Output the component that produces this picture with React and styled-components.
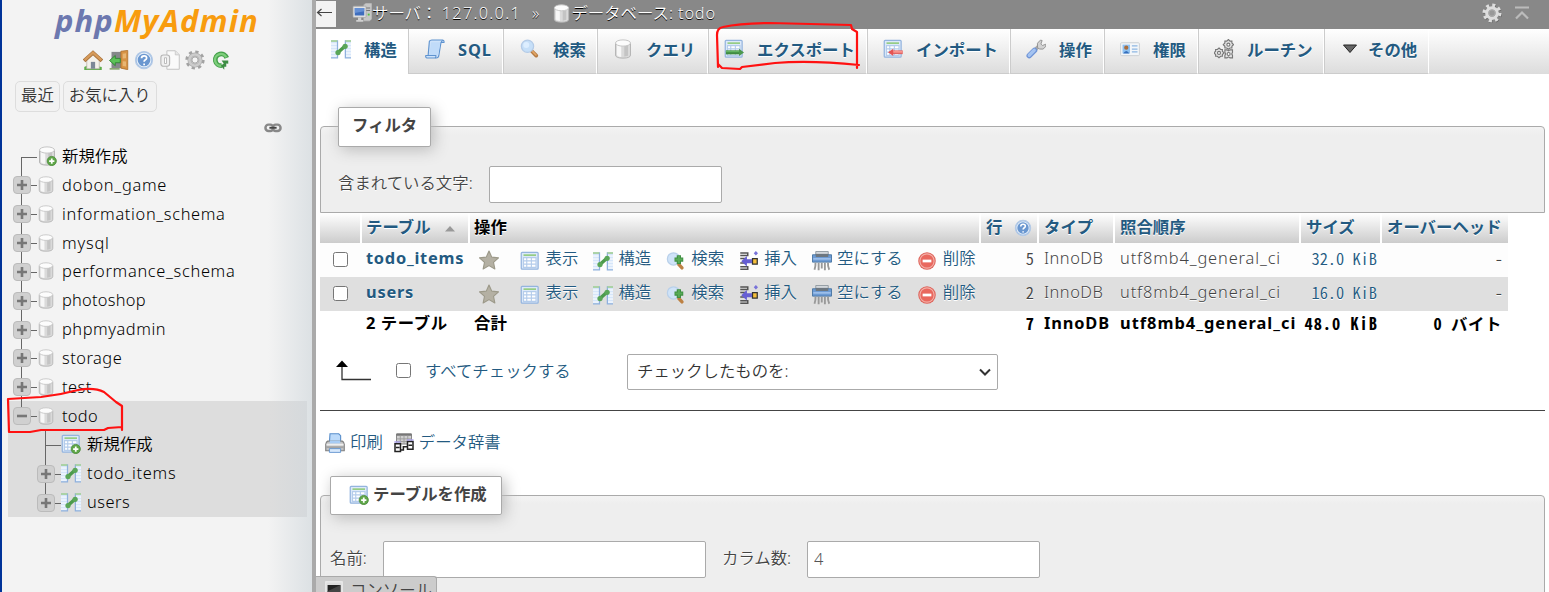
import React, { useState } from 'react';
import styled, { createGlobalStyle } from 'styled-components';

const GlobalStyle = createGlobalStyle`
  * {
    box-sizing: border-box;
  }
  body {
    margin: 0;
    overflow: hidden;
    background: #fff;
    color: #444;
    font-family: 'Noto Sans', 'Noto Sans CJK JP', sans-serif;
    font-size: 16.4px;
    font-weight: 350;
    line-height: 24px;
  }
  svg {
    display: block;
    flex: none;
  }
`;

const shapes = {
  home: (
    <>
      <path d="M1 13.5q3-2.5 14 0V16H1z" fill="#5fae4c" />
      <path d="M3 7.5 8 3l5 4.5V15H3z" fill="#f4f1ea" stroke="#b9b2a4" strokeWidth=".6" />
      <path d="M6.3 9.5h3.4V15H6.3z" fill="#7d8896" />
      <path d="M.9 8.7 8 2.3l7.1 6.4" fill="none" stroke="#a8733c" strokeWidth="3" />
      <path d="M1.3 8.1 8 2.1l6.7 6" fill="none" stroke="#d69a5a" strokeWidth="1.8" />
    </>
  ),
  exit: (
    <>
      <path d="M2 1.5h8v13H2z" fill="#85888a" />
      <path d="M9.5 1 15 .3v15.4L9.5 14.5z" fill="#d79345" stroke="#a96b27" strokeWidth=".6" />
      <path d="M11 3l2.6-.4v4L11 6.8zM11 9l2.6.1v4L11 12.7z" fill="#e8b673" />
      <path d="M.4 8.4 5 4.4v2.3h4v3.5H5v2.3z" fill="#5cc257" stroke="#2f8132" strokeWidth=".7" />
      <path d="M.5 14.5h8v1.2h-8z" fill="#7e9d63" />
    </>
  ),
  help: (
    <>
      <circle cx="8" cy="8" r="6.8" fill="#8fb3df" stroke="#b4cae6" />
      <circle cx="8" cy="8" r="5.5" fill="#6a97d0" stroke="#e3edf8" strokeWidth=".9" />
      <path d="M6 6.6q0-2 2.1-2 2 0 2 1.7 0 1-1.2 1.7-.8.5-.8 1.4M8.1 10.8v1.3" fill="none" stroke="#fff" strokeWidth="1.4" />
    </>
  ),
  docs: (
    <>
      <path d="M5.5.6h6.8l3.1 3.2v11.6H5.5z" fill="#fafafa" stroke="#c4c4c4" strokeWidth=".8" />
      <path d="M12.2.7v3.2h3.1" fill="#e6e6e6" stroke="#c4c4c4" strokeWidth=".6" />
      <rect x=".7" y="4" width="7" height="9" rx="2" fill="#f0f0f0" stroke="#b5b5b5" strokeWidth=".9" />
      <path d="M3.6 6.2h1.6v4.6H3.6z" fill="#fff" stroke="#aaa" strokeWidth=".6" />
    </>
  ),
  gear: (
    <>
      <circle cx="8" cy="8" r="6.4" fill="none" stroke="#a2a2a2" strokeWidth="2.6" strokeDasharray="2.5 2.53" />
      <circle cx="8" cy="8" r="4.4" fill="#eee" stroke="#aaa" strokeWidth="3.2" />
      <circle cx="8" cy="8" r="4.5" fill="none" stroke="#ccc" strokeWidth="2" />
      <circle cx="8" cy="8" r="2.5" fill="#f4f4f4" stroke="#999" strokeWidth=".7" />
    </>
  ),
  gearLight: (
    <>
      <circle cx="8.4" cy="8.6" r="6.2" fill="none" stroke="#666" strokeWidth="2.8" strokeDasharray="2.4 2.47" />
      <circle cx="8" cy="8" r="6.2" fill="none" stroke="#ddd" strokeWidth="2.8" strokeDasharray="2.4 2.47" />
      <circle cx="8" cy="8" r="4.2" fill="none" stroke="#ddd" strokeWidth="2.6" />
      <circle cx="8" cy="8" r="2.6" fill="#999" stroke="#bbb" strokeWidth=".5" />
    </>
  ),
  reload: (
    <>
      <path d="M12.6 6.3A4.7 4.7 0 1 0 8.6 12.5" fill="none" stroke="#45a04b" strokeWidth="3.8" />
      <path d="M12.2 5.9A4.7 4.7 0 1 0 8.6 12.5" fill="none" stroke="#7dce7b" strokeWidth="1.9" />
      <path d="M8.5 8.3h5.3v2.6l-1.6-.2v2.6h-1.6v2.5L7.8 12.6l2.4-1.9z" fill="#3c8d43" />
    </>
  ),
  db: (
    <>
      <path d="M2 3.5v9.3Q2 15.3 8 15.3t6-2.5V3.5z" fill="#dadada" stroke="#b6b6b6" strokeWidth=".8" />
      <path d="M3.2 4.5h3.4v9.8q-3.4-.3-3.4-1.8z" fill="#f7f7f7" />
      <path d="M9 5h3v8.3l-3 .7z" fill="#c4c4c4" />
      <ellipse cx="8" cy="3.2" rx="6" ry="2.5" fill="#fcfcfc" stroke="#c6c6c6" strokeWidth=".8" />
    </>
  ),
  plus: (
    <>
      <circle cx="11.8" cy="12" r="3.7" fill="#5fa648" stroke="#4a8a38" strokeWidth=".6" />
      <path d="M11.8 9.9v4.2M9.7 12h4.2" stroke="#fff" strokeWidth="1.4" />
    </>
  ),
  table: (
    <>
      <rect x="1" y="1" width="13.5" height="13.5" rx=".7" fill="#dce9f9" stroke="#94b4de" strokeWidth="1" />
      <path d="M2.8 3.3h10" stroke="#8cc873" strokeWidth="1.2" />
      <path d="M2.8 5.3h10v7.8h-10z" fill="#fff" stroke="#b4cceb" strokeWidth=".9" />
      <path d="M2.8 7.9h10M2.8 10.5h10M5.4 5.3v7.8M9.1 5.3v7.8" stroke="#b4cceb" strokeWidth=".9" />
    </>
  ),
  structure: (
    <>
      <path d="M0 1h5v14H0z" fill="#d6e6fa" />
      <path d="M11.5 1H16v14h-4.5z" fill="#d6e6fa" />
      <path d="M0 4h5M0 6.4h5M0 8.8h5M0 11.2h5M0 13.6h5M11.5 4H16M11.5 6.4H16M11.5 8.8H16M11.5 11.2H16M11.5 13.6H16" stroke="#fff" strokeWidth=".8" />
      <path d="M5.2 1v14H0M11.5 1v14H16" fill="none" stroke="#8fb1de" strokeWidth="1" />
      <path d="M0 1.6h5M11.5 1.6H16" stroke="#9ccc8c" strokeWidth="1.2" />
      <path d="M5.5 10.8 10.7 6.2" stroke="#4c9a4c" strokeWidth="2.8" />
      <circle cx="5.6" cy="10.8" r="2.1" fill="#5aa658" />
      <circle cx="11.3" cy="5.8" r="2.1" fill="#5aa658" />
    </>
  ),
  sql: (
    <>
      <path d="M3.5 1.8Q4 .8 5.5.8h8.7q1.3.3 1 2h-2.4L11 13.6q-.4 1.6-2 1.6H1.5q-1.3-.4-.8-2h1.8z" fill="#cfe3fa" stroke="#5f93cf" strokeWidth=".9" />
      <path d="M4.8 2.5h7.4l-1.7 10.3H3.4z" fill="#c0dbf9" />
      <path d="M1 13.2h7.7q.3 1.2-.6 2M13 2.8q0-1.5 1.5-1.6" fill="none" stroke="#5f93cf" strokeWidth=".9" />
    </>
  ),
  search: (
    <>
      <path d="m9.3 9.6 3.7 3.7" stroke="#b57a42" strokeWidth="3" strokeLinecap="round" />
      <path d="m10.2 10.1 2.6 2.7" stroke="#e3a767" strokeWidth="1.3" strokeLinecap="round" />
      <circle cx="6" cy="5.8" r="4.9" fill="#c6dff8" stroke="#b4cbe7" strokeWidth="1" />
      <circle cx="5" cy="4.7" r="2.4" fill="#def" />
    </>
  ),
  browse: (
    <>
      <path d="m10 10.5 2.8 3" stroke="#bd8143" strokeWidth="2.7" strokeLinecap="round" />
      <circle cx="6" cy="6.3" r="4.9" fill="#cfe3f8" stroke="#b9d0ea" />
      <path d="M10.3 3.3v7M6.8 6.8h7" stroke="#3f8f42" strokeWidth="3.4" />
      <path d="M10.3 4v5.6M7.5 6.8h5.6" stroke="#58ab57" strokeWidth="1.6" />
    </>
  ),
  exportArrow: (
    <>
      <path d="M1.5 10.7h11" stroke="#3f8b42" strokeWidth="3.2" />
      <path d="M1.5 10h11" stroke="#62b463" strokeWidth="1.2" />
      <path d="m12 7.8 4 2.9-4 2.9z" fill="#4c984d" />
    </>
  ),
  importArrow: (
    <>
      <path d="M7 10.6h8.8" stroke="#e06565" strokeWidth="3" />
      <path d="M7 10.3h8.5" stroke="#ff9a93" strokeWidth="1.2" />
      <path d="M8.2 7.7 4 10.6l4.2 2.9z" fill="#e45353" />
    </>
  ),
  wrench: (
    <>
      <path d="m7.3 8.6 3-3" stroke="#a6a6a6" strokeWidth="3" />
      <path d="M9.2 6.6Q8 3 11.5.9l1.4.3-1 2.8 1.2 1.2 2.6-1 .3 1.6q-2 3.4-5.400 2.200z" fill="#d2d2d2" stroke="#8d8d8d" strokeWidth=".7" />
      <path d="m2.6 13.3 4.2-4.2" stroke="#6f94d6" strokeWidth="4.400" strokeLinecap="round" />
      <path d="m2.6 13 4-4" stroke="#a4c3f1" strokeWidth="2.6" strokeLinecap="round" />
    </>
  ),
  rights: (
    <>
      <rect x=".5" y="3" width="15" height="10.3" rx=".8" fill="#f3f6f9" stroke="#ccd0d4" strokeWidth=".8" />
      <path d="M2 4.5h6v7H2z" fill="#8fc1f0" />
      <circle cx="5" cy="6.9" r="1.7" fill="#ab6d3b" />
      <path d="M2.5 11.5q2.5-4 5 0z" fill="#346fbd" />
      <path d="M9.5 5.5h4.5M9.5 8h4.5M9.5 10.3h4.5" stroke="#8db6e2" strokeWidth="1" />
    </>
  ),
  routines: (
    <g fill="#e4e4e4" stroke="#777" strokeWidth=".9">
      <path d="M11.5.4l1.3 1.3h1.5v1.5L15.6 4.5l-1.3 1.3v1.4h-1.5l-1.3 1-1.3-1H8.7V5.8L7.4 4.5l1.3-1.3V1.7h1.5z" />
      <path d="M4 7.2l1.3 1.2h1.4v1.4L8 11.1l-1.3 1.3v1.4H5.3L4 15l-1.3-1.2H1.3v-1.4L0 11.1l1.3-1.3V8.4h1.4z" />
      <path d="M8.7 8.7h1.7l1.2.8 1.2-.8h2v2l-.6 1.2.6 1.2v2h-2l-1.2-.8-1.2.8H8.7v-2l.6-1.2-.6-1.2z" />
      <circle cx="11.5" cy="4.5" r="1.2" fill="#fff" />
      <circle cx="4" cy="11.1" r="1.2" fill="#fff" />
      <circle cx="11.7" cy="12" r="1.2" fill="#fff" />
    </g>
  ),
  server: (
    <>
      <path d="M9 1.5 11 0h5v13l-2 1.5H9z" fill="#c6c6c6" stroke="#8f8f8f" strokeWidth=".5" />
      <path d="M11 4h3.5M11 6h3.5" stroke="#777" strokeWidth=".8" />
      <path d="M12.6 8.5h1.5V10h-1.5z" fill="#4fc13d" />
      <rect x=".8" y="2.5" width="10.4" height="9" rx=".6" fill="#e3e3e3" stroke="#a0a0a0" strokeWidth=".6" />
      <path d="M2.2 4h7.6v6H2.2z" fill="#3e6dbd" />
      <path d="M2.2 4h7.6v2.5L2.2 8z" fill="#6590d5" />
      <path d="M4.8 11.5h2.6v2H9v1.4H3.4v-1.4h1.4z" fill="#d0d0d0" />
    </>
  ),
  star: (
    <path
      d="m8 .8 2.2 4.9 5.4.6-4 3.6 1.1 5.3L8 12.5l-4.7 2.7 1.1-5.3-4-3.6 5.4-.6z"
      fill="#b4b0a3"
      stroke="#9c9989"
      strokeWidth=".9"
      strokeLinejoin="round"
    />
  ),
  insert: (
    <>
      <path d="M1 1.5h6v2H1M1 6h5M1 9.5h5M1 12.5h6v2H1" fill="none" stroke="#555" strokeWidth="1.2" />
      <path d="M1.8 8.2 6.3 4v2.6h4v3.2h-4v2.6z" fill="#665fd3" />
      <path d="M10.8 6h3.8v4.5h-3.8z" fill="#f6bf3b" stroke="#333" strokeWidth="1" />
      <path d="M13.5 0l1.7 1.8-1.7 1.8-1.7-1.8z" fill="#7772d9" />
    </>
  ),
  empty: (
    <>
      <path d="M3 .4h10v3H3z" fill="#d3d8dc" stroke="#8d969e" strokeWidth=".7" />
      <path d="M.4 3h15.2v5.9H.4z" fill="#6d9bd4" stroke="#44719f" strokeWidth=".7" />
      <path d="M3 2.3h10v2.5H3z" fill="#6d7780" />
      <path d="M1 6.3h14" stroke="#9fc1eb" strokeWidth="1.3" />
      <path d="M2.8 9.3Q3 12 2 15M5.3 9.3v6M7.8 9.3v4.7M10.3 9.3v6M12.8 9.3q-.3 3 1 5.7" fill="none" stroke="#999" strokeWidth="1.5" />
    </>
  ),
  drop: (
    <>
      <circle cx="8" cy="8" r="7" fill="#de6259" />
      <circle cx="8" cy="8" r="5.7" fill="#e9685e" stroke="#f3b0a8" strokeWidth=".9" />
      <path d="M4.5 8h7" stroke="#fff" strokeWidth="2.2" />
    </>
  ),
  print: (
    <>
      <path d="M4 .6h7l1.5 1.5V8H3.5z" fill="#bcdafa" stroke="#5a8fcb" strokeWidth=".9" />
      <path d="M.6 9q.3-2 1.6-2.5h11.6q1.3.5 1.6 2.5v5.2H.6z" fill="#c2c2c2" stroke="#808080" strokeWidth=".9" />
      <path d="M3.8 6h8.4v2.5H3.8z" fill="#a7ccf5" />
      <path d="M1.2 9.3h13.6" stroke="#eee" strokeWidth="1.5" />
      <path d="M1.2 11.3h13.6" stroke="#999" strokeWidth="1" />
      <path d="M3.5 12.5h9v3h-9z" fill="#d7e8fb" stroke="#5a8fcb" strokeWidth=".7" />
    </>
  ),
  dictionary: (
    <>
      <path d="M2 .8h12v8H2z" fill="#d0d0d0" stroke="#888" strokeWidth=".8" />
      <path d="M2 1.3h12" stroke="#777" strokeWidth="1.8" />
      <path d="M2 4.7h12M2 6.8h12M5 2v7M8 2v7M11 2v7" stroke="#999" strokeWidth=".7" />
      <path d="M.8 8.5h4.4v6.3H.8zM10.8 6.8h4.4v6.2h-4.4z" fill="#fff" stroke="#222" strokeWidth="1.2" />
      <path d="M1.5 11.5h3M11.5 9.8h3" stroke="#222" strokeWidth="1.2" />
      <path d="M5.5 13.5h2v-2.5h3" fill="none" stroke="#222" strokeWidth="1.2" />
      <path d="M.3 7.2h5M10.3 5.6h5.3" stroke="#aaa2e8" strokeWidth="1.2" />
    </>
  ),
  link: (
    <g fill="none" stroke="#888" strokeWidth="2.2">
      <rect x="1.3" y="5" width="7" height="5.6" rx="2.7" />
      <rect x="7.7" y="5" width="7" height="5.6" rx="2.7" />
      <path d="M4.8 7.8h6.4" stroke="#444" strokeWidth="1.7" />
    </g>
  ),
  console: (
    <>
      <rect x=".7" y=".7" width="14.6" height="14" fill="#ddd" stroke="#eee" />
      <path d="M2.3 3.5h11.4v10H2.3z" fill="#222" />
      <path d="M2.3 9 13.7 3.5v10H2.3z" fill="#444" />
    </>
  ),
};

const Icon = ({ names, size = 20 }) => (
  <svg width={size} height={size} viewBox="0 0 16 16">
    {names.split(' ').map((name) => (
      <g key={name}>{shapes[name]}</g>
    ))}
  </svg>
);

const Page = styled.div`
  display: flex;
  height: 592px;
  overflow: hidden;
`;

const Sidebar = styled.aside`
  width: 316px;
  flex: none;
  border-left: 2px solid #039;
  border-right: 4px solid #aaa;
  background: linear-gradient(to right, #f3f3f3 266px, #dce1e4 310px);
  color: #000;
`;

const Logo = styled.div`
  height: 45px;
  padding: 0 0 0 53px;
  color: #f89c0e;
  font: italic 700 31px/40px 'Noto Sans', sans-serif;
  letter-spacing: 1.1px;
  white-space: nowrap;

  span {
    color: #6c78af;
  }
`;

const NavIcons = styled.div`
  display: flex;
  gap: 5.5px;
  height: 36px;
  padding: 5px 0 0 81px;
`;

const QuickLinks = styled.div`
  display: flex;
  gap: 3px;
  padding-left: 13px;
`;

const QuickLink = styled.button`
  height: 31px;
  padding: 0 5px 4px;
  border: 1px solid #ddd;
  border-radius: 5px;
  background: #f2f2f2;
  color: #333;
  font: inherit;
  line-height: 24px;
  white-space: nowrap;
`;

const LinkToggle = styled.div`
  display: flex;
  height: 29.6px;
  padding: 7px 0 0 262px;
`;

const Tree = styled.div`
  margin-left: 6px;
`;

const TreeGroup = styled.div`
  width: 299px;
  background: ${(props) =>
    props.$selected
      ? 'linear-gradient(to right, #ddd 262px, #d5d9dc 299px)'
      : 'transparent'};
`;

const TreeRow = styled.div`
  display: flex;
  align-items: center;
  height: 28.85px;
  padding-left: ${(props) => props.$level * 24}px;
`;

const TreeLabel = styled.a`
  padding-left: ${(props) => props.$pad}px;
  line-height: 28px;
  letter-spacing: ${(props) => props.$ls || 0}px;
  white-space: nowrap;
`;

const Main = styled.main`
  flex: 1;
  min-width: 0;
  position: relative;
`;

const TopBar = styled.header`
  display: flex;
  align-items: center;
  height: 29px;
  padding-bottom: 3px;
  background: #888;
  color: #fff;
  text-shadow: 0 1px 0 #000;
  white-space: nowrap;
`;

const BackButton = styled.button`
  width: 20px;
  height: 26px;
  margin: 1px 16px 0 0;
  padding: 0;
  border: 0;
  background: #f3f3f3;
`;

const Crumb = styled.span`
  display: flex;
  align-items: center;
  white-space: pre;
`;

const Spaced = styled.span`
  letter-spacing: ${(props) => props.$ls}px;
`;

const Separator = styled.span`
  margin: 0 13px 0 11px;
`;

const TopTools = styled.div`
  display: flex;
  align-items: center;
  gap: 12px;
  margin-left: auto;
  padding-right: 19px;
`;

const Tabs = styled.nav`
  display: flex;
  height: 45px;
  background: linear-gradient(#fff, #dcdcdc);
`;

const Tab = styled.a`
  display: flex;
  gap: ${(props) => props.$gap || 13}px;
  width: ${(props) => props.$width}px;
  height: 45px;
  padding: 10px 0 0 ${(props) => props.$pad || 15}px;
  border-left: ${(props) => (props.$active ? 0 : '1px solid #ccc')};
  border-right: 1px solid #fff;
  border-bottom: 1px solid ${(props) => (props.$active ? '#fff' : '#ccc')};
  background: ${(props) => (props.$active ? '#fff' : 'transparent')};
  color: #235a81;
  font-weight: bold;
  line-height: 22px;
  letter-spacing: ${(props) => props.$ls || 0}px;
  text-shadow: 0 1px 0 #fff;
  white-space: nowrap;
`;

const Fieldset = styled.section`
  height: ${(props) => props.$height}px;
  margin: ${(props) => props.$top}px 4px 0;
  padding-left: ${(props) => props.$pad}px;
  border: 1px solid #aaa;
  border-radius: 4px 4px 0 0;
  background: linear-gradient(#f3f3f3, #eee 8px);
  text-shadow: 0 1px 0 #fff;
`;

const Legend = styled.div`
  display: flex;
  gap: 4px;
  width: ${(props) => props.$width}px;
  height: ${(props) => props.$height || 40}px;
  margin-top: -20px;
  padding: 5px 0 0 ${(props) => props.$pad}px;
  border: 1px solid #aaa;
  border-radius: 2px;
  background: #fff;
  box-shadow: 3px 3px 15px #bbb;
  color: #444;
  font-weight: bold;
  white-space: nowrap;

  svg {
    margin-top: 3px;
  }
`;

const FieldRow = styled.div`
  display: flex;
  margin-top: ${(props) => props.$top}px;
  white-space: nowrap;
`;

const Label = styled.label`
  width: ${(props) => props.$width}px;
  padding-top: 5px;
`;

const Input = styled.input`
  width: ${(props) => props.$width}px;
  height: 37px;
  margin-right: 16px;
  padding: 0 6px 2px;
  border: 1px solid #aaa;
  border-radius: 2px;
  background: #fff;
  color: #555;
  font: inherit;
`;

const TableGrid = styled.div`
  width: 1188px;
  margin-left: 4px;
`;

const GridRow = styled.div`
  display: grid;
  grid-template-columns: 42px 108px 511px 58px 76px 186px 81px 126px;
  height: ${(props) => props.$height || 34}px;
  background: ${(props) => props.$bg || '#fff'};
  color: ${(props) => (props.$total ? '#000' : '#444')};
  font-weight: ${(props) => (props.$total ? 'bold' : 'inherit')};
  text-shadow: ${(props) => (props.$total ? 'none' : '0 1px 0 #fff')};
`;

const HeadCell = styled.div`
  display: flex;
  align-items: center;
  gap: 13px;
  padding: 0 0 3px 4px;
  border-right: 2px solid #fff;
  background: linear-gradient(#fff, #ccc);
  color: ${(props) => (props.$plain ? '#000' : '#235a81')};
  font-weight: bold;
  white-space: nowrap;

  &:nth-child(n + 4) {
    padding-left: 5px;
    gap: 12px;
  }
  &:last-child {
    border-right: 0;
  }
  svg {
    margin-top: 3px;
  }
`;

const Cell = styled.div`
  display: flex;
  align-items: center;
  justify-content: ${(props) => (props.$right ? 'flex-end' : 'flex-start')};
  padding: 0 ${(props) => (props.$right ? props.$right : 0)}px 4px
    ${(props) => (props.$right ? 0 : 4)}px;
  color: ${(props) => (props.$link ? '#235a81' : 'inherit')};
  font-weight: ${(props) => (props.$bold ? 'bold' : 'inherit')};
  letter-spacing: ${(props) => props.$ls || 0}px;
  white-space: nowrap;

  &:nth-child(5),
  &:nth-child(6) {
    padding-left: 5px;
  }
`;

// Half-width digits and latin letters of the CJK face
const Narrow = styled.span`
  font-family: 'Noto Sans CJK JP', sans-serif;
  font-feature-settings: 'hwid';
  letter-spacing: ${(props) => props.$ls || 0}px;
`;

const Checkbox = styled.input`
  width: 15px;
  height: 15px;
  margin: ${(props) => props.$margin || '0'};
`;

const StarBox = styled.span`
  padding: 4px 21px 0 5px;
`;

const Action = styled.a`
  display: flex;
  align-items: center;
  gap: 5.500px;
  margin-right: 14.600px;
  color: #235a81;

  svg {
    margin-top: 5px;
  }
`;

const BulkBar = styled.div`
  display: flex;
  align-items: flex-start;
  height: 75px;
  margin: 0 4px;
  padding: 18px 0 0 12px;
  border-bottom: 1px solid #444;
  color: #235a81;
  white-space: nowrap;
`;

const CheckAll = styled.label`
  width: 202px;
  margin: 5px 0 0 14px;
`;

const Select = styled.div`
  display: flex;
  align-items: center;
  justify-content: space-between;
  width: 371px;
  height: 36px;
  padding: 0 5px 2px 9px;
  border: 1px solid #aaa;
  border-radius: 2px;
  background: #fff;
  color: #333;
`;

const LinkRow = styled.div`
  display: flex;
  gap: 11px;
  padding: 19px 0 0 9px;
  height: 64px;

  svg {
    margin-top: 3px;
  }
  a {
    margin-right: 0;
    align-items: flex-start;
    gap: 5px;
  }
`;

const ConsoleBar = styled.div`
  position: absolute;
  left: 0;
  bottom: 0;
  display: flex;
  gap: 7px;
  width: 121px;
  height: 16px;
  padding: 4px 0 0 9px;
  overflow: hidden;
  border: 1px solid #aaa;
  border-width: 1px 1px 0 0;
  border-radius: 0 3px 0 0;
  background: #ccc;
  line-height: 17px;
  white-space: nowrap;
`;

const Markup = styled.svg`
  position: absolute;
  left: 0;
  top: 0;
  pointer-events: none;
`;

const tree = [
  { name: '新規作成', icon: 'db plus', branch: 'first', pad: 5 },
  { name: 'dobon_game', icon: 'db', branch: '+', ls: 0.72 },
  { name: 'information_schema', icon: 'db', branch: '+', ls: 0.66 },
  { name: 'mysql', icon: 'db', branch: '+', ls: 0.8 },
  { name: 'performance_schema', icon: 'db', branch: '+', ls: 0.68 },
  { name: 'photoshop', icon: 'db', branch: '+', ls: 0.25 },
  { name: 'phpmyadmin', icon: 'db', branch: '+', ls: 0.55 },
  { name: 'storage', icon: 'db', branch: '+', ls: 0.5 },
  { name: 'test', icon: 'db', branch: '+', ls: 0.5 },
];

const openTree = [
  { name: 'todo', icon: 'db', branch: '-', level: 0, ls: 0.3 },
  { name: '新規作成', icon: 'table plus', branch: 'mid', level: 1, pad: 6 },
  { name: 'todo_items', icon: 'structure', branch: '+', level: 1, pad: 6, ls: 0.7 },
  { name: 'users', icon: 'structure', branch: 'last+', level: 1, pad: 6, ls: 0.5 },
];

const tabs = [
  { label: '構造', icon: 'structure', width: 92, active: true },
  { label: 'SQL', icon: 'sql', width: 95, pad: 16, ls: 0.9 },
  { label: '検索', icon: 'search', width: 94, pad: 16 },
  { label: 'クエリ', icon: 'db', width: 111 },
  { label: 'エクスポート', icon: 'table exportArrow', width: 159 },
  { label: 'インポート', icon: 'table importArrow', width: 143 },
  { label: '操作', icon: 'wrench', width: 94 },
  { label: '権限', icon: 'rights', width: 94 },
  { label: 'ルーチン', icon: 'routines', width: 126 },
];

const actions = [
  ['table', '表示'],
  ['structure', '構造'],
  ['browse', '検索'],
  ['insert', '挿入'],
  ['empty', '空にする'],
  ['drop', '削除'],
];

const rows = [
  { name: 'todo_items', count: 5, size: '32.0 KiB', bg: '#fdfdfd' },
  { name: 'users', count: 2, size: '16.0 KiB', bg: '#dfdfdf' },
];

const Branch = ({ type }) => {
  const boxed = type.includes('+') || type === '-';
  const top = type === 'first' ? 15 : 0;
  const bottom = type === '-' || type === 'last+' ? 15 : 29;
  return (
    <svg width="29" height="29" viewBox="0 0 29 29">
      <path d={`M13.5 ${top}V${bottom}M13.5 15.5H29`} stroke="#666" fill="none" />
      {boxed && (
        <>
          <rect x="5.500" y="6.500" width="17" height="17" rx="3.500" fill="#d0d0d0" stroke="#bbb" />
          <path
            d={type === '-' ? 'M9 15h10' : 'M9 15h10M14 10v10'}
            stroke="#777"
            strokeWidth="2.600"
          />
        </>
      )}
    </svg>
  );
};

const TreeItem = ({ item }) => (
  <TreeRow $level={item.level || 0}>
    <Branch type={item.branch} />
    <Icon names={item.icon} size={item.icon === 'db' ? 18 : 20} />
    <TreeLabel $pad={item.pad || 7} $ls={item.ls}>
      {item.name}
    </TreeLabel>
  </TreeRow>
);

const Navigation = () => (
  <Sidebar>
    <Logo>
      <span>php</span>MyAdmin
    </Logo>
    <NavIcons>
      {['home', 'exit', 'help', 'docs', 'gear', 'reload'].map((name) => (
        <Icon key={name} names={name} />
      ))}
    </NavIcons>
    <QuickLinks>
      <QuickLink>最近</QuickLink>
      <QuickLink>お気に入り</QuickLink>
    </QuickLinks>
    <LinkToggle>
      <Icon names="link" size={18} />
    </LinkToggle>
    <Tree>
      <TreeGroup>
        {tree.map((item) => (
          <TreeItem key={item.name} item={item} />
        ))}
      </TreeGroup>
      <TreeGroup $selected>
        {openTree.map((item) => (
          <TreeItem key={item.name} item={item} />
        ))}
      </TreeGroup>
    </Tree>
  </Sidebar>
);

const TableList = () => {
  const [checked, setChecked] = useState({});

  return (
    <TableGrid>
      <GridRow $height={30}>
        <HeadCell />
        <HeadCell>
          テーブル
          <svg width="12" height="10" viewBox="0 0 12 10">
            <path d="M1 8.500 6 3l5 5.500z" fill="#999" />
          </svg>
        </HeadCell>
        <HeadCell $plain>操作</HeadCell>
        <HeadCell>
          行
          <Icon names="help" size={18} />
        </HeadCell>
        <HeadCell>タイプ</HeadCell>
        <HeadCell>照合順序</HeadCell>
        <HeadCell>サイズ</HeadCell>
        <HeadCell>オーバーヘッド</HeadCell>
      </GridRow>
      {rows.map((row) => (
        <GridRow key={row.name} $bg={row.bg}>
          <Cell>
            <Checkbox
              type="checkbox"
              $margin="2px 0 0 9px"
              checked={!!checked[row.name]}
              onChange={() =>
                setChecked({ ...checked, [row.name]: !checked[row.name] })
              }
            />
          </Cell>
          <Cell $link $bold $ls={0.75}>
            {row.name}
          </Cell>
          <Cell>
            <StarBox>
              <Icon names="star" />
            </StarBox>
            {actions.map(([icon, label]) => (
              <Action key={icon}>
                <Icon names={icon} />
                {label}
              </Action>
            ))}
          </Cell>
          <Cell $right={5}>
            <Narrow>{row.count}</Narrow>
          </Cell>
          <Cell $ls={0.5}>InnoDB</Cell>
          <Cell $ls={0.87}>utf8mb4_general_ci</Cell>
          <Cell $right={5} $link>
            <Narrow>{row.size}</Narrow>
          </Cell>
          <Cell $right={5}>
            <Narrow>-</Narrow>
          </Cell>
        </GridRow>
      ))}
      <GridRow $total $height={25}>
        <Cell />
        <Cell $ls={0.6}>2 テーブル</Cell>
        <Cell>合計</Cell>
        <Cell $right={5}>
          <Narrow>7</Narrow>
        </Cell>
        <Cell $ls={0.85}>InnoDB</Cell>
        <Cell $ls={1}>utf8mb4_general_ci</Cell>
        <Cell $right={4}>
          <Narrow $ls={1}>48.0 KiB</Narrow>
        </Cell>
        <Cell $right={6}>
          <Narrow $ls={0.6}>0 バイト</Narrow>
        </Cell>
      </GridRow>
    </TableGrid>
  );
};

const Annotations = () => (
  <Markup width="1549" height="592" viewBox="0 0 1549 592">
    <g fill="none" stroke="#f11" strokeWidth="2.2" strokeLinejoin="round" strokeLinecap="round">
      <path d="M8 399 41 397Q60 395 78 390Q94 387 104 392L116 402 122 406 122 430M8 399 9 432 30 432 41 430 104 430 108 428 122 427" />
      <path d="M718 67 717 35Q717 28 723 27Q740 23 770 23L851 25 852 29 857 32 857 68M718 64 722 68 740 69 742 67 775 63Q810 60 859 65" />
    </g>
  </Markup>
);

const App = () => (
  <>
    <GlobalStyle />
    <Page>
      <Navigation />
      <Main>
        <TopBar>
          <BackButton aria-label="back">
            <svg width="20" height="26" viewBox="0 0 20 26">
              <path d="M1.500 11.500H16M5.500 8l-4 3.500 4 3.500" fill="none" stroke="#444" strokeWidth="1.200" />
            </svg>
          </BackButton>
          <Crumb>
            <Icon names="server" />
            サーバ： <Spaced $ls={1.25}>127.0.0.1</Spaced>
          </Crumb>
          <Separator>»</Separator>
          <Crumb>
            <Icon names="db" size={19} />
            データベース:<Spaced $ls={0.8}> todo</Spaced>
          </Crumb>
          <TopTools>
            <Icon names="gearLight" />
            <svg width="16" height="14" viewBox="0 0 16 14">
              <path d="M1 1.500h14M2 12.500l6-6 6 6" fill="none" stroke="#bbb" strokeWidth="2.200" />
            </svg>
          </TopTools>
        </TopBar>
        <Tabs>
          {tabs.map((tab) => (
            <Tab
              key={tab.label}
              $width={tab.width}
              $active={tab.active}
              $pad={tab.pad}
              $ls={tab.ls}
            >
              <Icon names={tab.icon} />
              {tab.label}
            </Tab>
          ))}
          <Tab $width={105} $pad={17} $gap={10}>
            <svg width="16" height="20" viewBox="0 0 16 20">
              <path d="M1.500 6h13L8 13.500z" fill="#666" stroke="#222" />
            </svg>
            その他
          </Tab>
        </Tabs>
        <Fieldset $top={52} $height={87} $pad={17}>
          <Legend $width={93} $pad={13}>
            フィルタ
          </Legend>
          <FieldRow $top={19}>
            <Label $width={151}>含まれている文字:</Label>
            <Input $width={233} />
          </FieldRow>
        </Fieldset>
        <TableList />
        <BulkBar>
          <svg width="45" height="32" viewBox="0 0 45 32">
            <path d="M10 10v15.500h29" fill="none" stroke="#333" strokeWidth="1.300" />
            <path d="M4 13 10 6.500 16 13z" fill="#000" />
          </svg>
          <Checkbox type="checkbox" $margin="9px 0 0 19px" />
          <CheckAll>すべてチェックする</CheckAll>
          <Select>
            チェックしたものを:
            <svg width="14" height="14" viewBox="0 0 14 14">
              <path d="m2 5.500 5 5 5-5" fill="none" stroke="#333" strokeWidth="2" />
            </svg>
          </Select>
        </BulkBar>
        <LinkRow>
          <Action>
            <Icon names="print" />
            印刷
          </Action>
          <Action>
            <Icon names="dictionary" />
            データ辞書
          </Action>
        </LinkRow>
        <Fieldset $top={20} $height={120} $pad={9}>
          <Legend $width={172} $height={39} $pad={18}>
            <Icon names="table plus" />
            テーブルを作成
          </Legend>
          <FieldRow $top={26}>
            <Label $width={53}>名前:</Label>
            <Input $width={323} />
            <Label $width={85}>カラム数:</Label>
            <Input $width={233} defaultValue="4" />
          </FieldRow>
        </Fieldset>
        <ConsoleBar>
          <Icon names="console" size={18} />
          コンソール
        </ConsoleBar>
      </Main>
      <Annotations />
    </Page>
  </>
);

export default App;
